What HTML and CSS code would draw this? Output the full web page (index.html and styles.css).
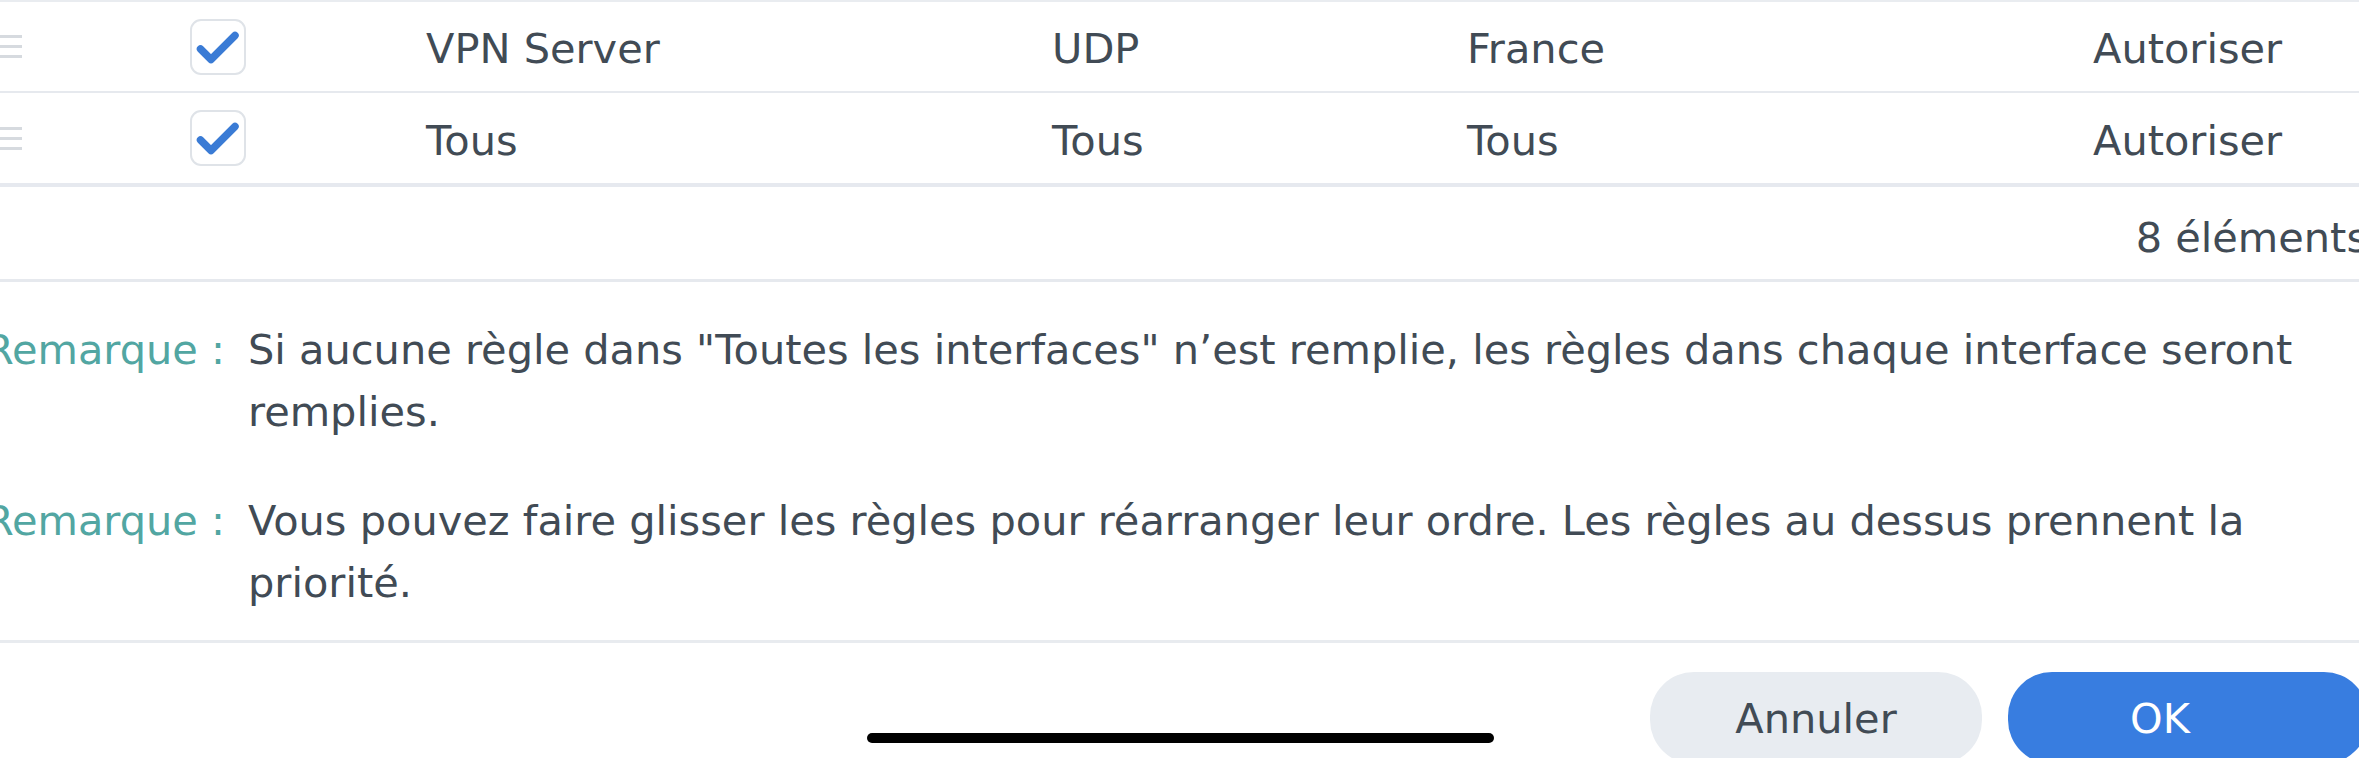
FILE: index.html
```html
<!DOCTYPE html>
<html lang="fr">
<head>
<meta charset="utf-8">
<title>Règles</title>
<link rel="stylesheet" href="styles.css">
</head>
<body>
<div class="dialog">
  <div class="table">
    <div class="row">
      <div class="handle"><span></span><span></span><span></span></div>
      <div class="check">
        <svg viewBox="0 0 56 56" width="56" height="56"><rect x="1" y="1" width="54" height="54" rx="10" ry="10" fill="#fff" stroke="#dfe3e8" stroke-width="2"/><path d="M10.5 30 L21 40.5 L45 16.5" fill="none" stroke="#3a7bd5" stroke-width="7.5" stroke-linecap="round" stroke-linejoin="round"/></svg>
      </div>
      <div class="cell">VPN Server</div>
      <div class="cell">UDP</div>
      <div class="cell">France</div>
      <div class="cell">Autoriser</div>
    </div>
    <div class="row last">
      <div class="handle"><span></span><span></span><span></span></div>
      <div class="check">
        <svg viewBox="0 0 56 56" width="56" height="56"><rect x="1" y="1" width="54" height="54" rx="10" ry="10" fill="#fff" stroke="#dfe3e8" stroke-width="2"/><path d="M10.5 30 L21 40.5 L45 16.5" fill="none" stroke="#3a7bd5" stroke-width="7.5" stroke-linecap="round" stroke-linejoin="round"/></svg>
      </div>
      <div class="cell">Tous</div>
      <div class="cell">Tous</div>
      <div class="cell">Tous</div>
      <div class="cell">Autoriser</div>
    </div>
  </div>
  <div class="pager">8 éléments</div>
  <div class="notes">
    <div class="note">
      <div class="note-label">Remarque :</div>
      <div class="note-text">Si aucune règle dans "Toutes les interfaces" n’est remplie, les règles dans chaque interface seront remplies.</div>
    </div>
    <div class="note">
      <div class="note-label">Remarque :</div>
      <div class="note-text">Vous pouvez faire glisser les règles pour réarranger leur ordre. Les règles au dessus prennent la priorité.</div>
    </div>
  </div>
  <div class="actions">
    <button class="btn btn-cancel">Annuler</button>
    <button class="btn btn-ok">OK</button>
  </div>
</div>
<div class="home-indicator"></div>
</body>
</html>
```
FILE: styles.css
```css
html, body {
  margin: 0;
  padding: 0;
  background: #ffffff;
}
body {
  width: 2359px;
  height: 758px;
  overflow: hidden;
  position: relative;
  font-family: "DejaVu Sans", "Liberation Sans", sans-serif;
  font-size: 41.5px;
  color: #414b55;
}
.dialog {
  margin-left: -24px;
  width: 2400px;
}
.table {
  border-top: 2px solid #e9ecf0;
}
.row {
  display: grid;
  grid-template-columns: 214px 236px 626px 415px 626px 1fr;
  align-items: center;
  height: 89px;
  border-bottom: 2px solid #e6e9ee;
}
.row.last {
  height: 90px;
  border-bottom: 4px solid #e6e9ef;
}
.handle {
  display: flex;
  flex-direction: column;
  gap: 7px;
  width: 46px;
}
.handle span {
  display: block;
  height: 3px;
  background: #d6dadf;
}
.check {
  display: flex;
  align-items: center;
  height: 56px;
}
.check svg {
  display: block;
}
.cell {
  padding-top: 4px;
  white-space: nowrap;
  line-height: 49px;
}
.pager {
  height: 95px;
  box-sizing: border-box;
  padding-top: 8px;
  padding-right: 8px;
  display: flex;
  align-items: center;
  justify-content: flex-end;
  border-bottom: 3px solid #e6e9ee;
  white-space: nowrap;
}
.notes {
  padding: 37px 0 26px 0;
  display: flex;
  flex-direction: column;
  gap: 47px;
}
.note {
  display: grid;
  grid-template-columns: 272px 1fr;
  line-height: 62px;
}
.note-label {
  color: #52a6a2;
  text-align: right;
  padding-right: 23px;
  white-space: nowrap;
}
.note-text {
  padding-right: 30px;
}
.actions {
  border-top: 3px solid #e8ebef;
  padding-top: 29px;
  padding-right: 8px;
  display: flex;
  justify-content: flex-end;
  gap: 26px;
}
.btn {
  height: 92px;
  border: none;
  border-radius: 44px;
  font-family: "DejaVu Sans", "Liberation Sans", sans-serif;
  font-size: 41.5px;
  padding: 0;
  flex: none;
}
.btn-cancel {
  width: 332px;
  background: #e8ecf1;
  color: #414b55;
}
.btn-ok {
  width: 360px;
  padding-right: 56px;
  background: #387de0;
  color: #ffffff;
}
.home-indicator {
  position: absolute;
  left: 867px;
  top: 733px;
  width: 627px;
  height: 10px;
  border-radius: 5px;
  background: #000000;
}
```
